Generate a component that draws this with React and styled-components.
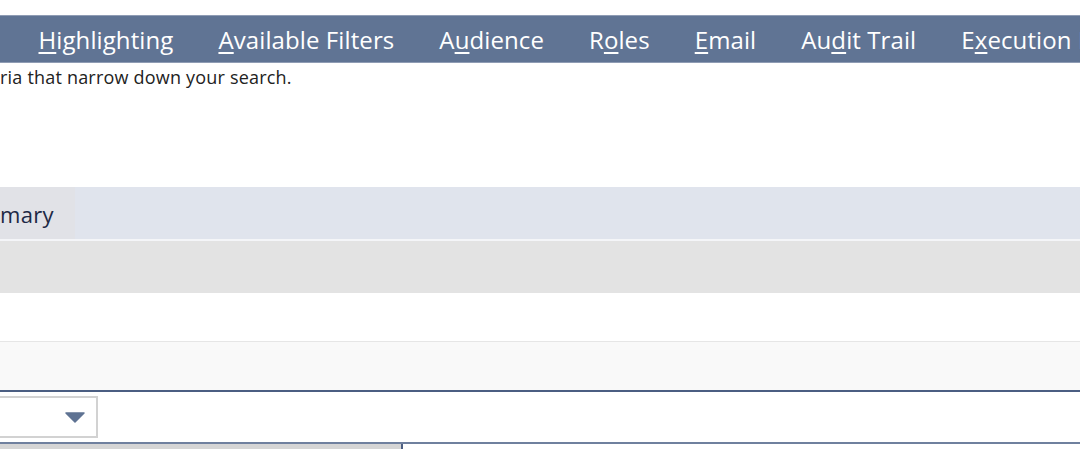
import styled, { createGlobalStyle } from "styled-components";

const GlobalStyle = createGlobalStyle`
  html, body {
    margin: 0;
    padding: 0;
    background: #ffffff;
    font-family: "Open Sans", "Noto Sans", sans-serif;
    overflow: hidden;
  }
`;

const Page = styled.div`
  width: 1080px;
  height: 449px;
  overflow: hidden;
  padding-top: 15px;
  box-sizing: border-box;
`;

// Top tab navigation
const NavBar = styled.nav`
  display: flex;
  align-items: center;
  height: 48px;
  box-sizing: border-box;
  background: #607494;
  border-top: 1px solid #8f9cb4;
  border-bottom: 1px solid #8f9cb4;
  padding-left: 16px;
  padding-top: 2px;
  white-space: nowrap;
  overflow: hidden;
`;

const NavItem = styled.a`
  flex: none;
  padding: 0 22.5px;
  color: #ffffff;
  font-size: 24px;
  line-height: 44px;
  text-decoration: none;
  letter-spacing: 0.1px;

  u {
    text-decoration-thickness: 2px;
    text-underline-offset: 3px;
  }
`;

const Description = styled.p`
  margin: 0;
  padding-top: 2px;
  height: 122px;
  font-size: 18px;
  line-height: 24px;
  letter-spacing: 0.2px;
  color: #222222;
  white-space: nowrap;
`;

// Sub tabs
const SubTabBar = styled.div`
  display: flex;
  height: 52px;
  background: #e0e4ed;
  border-bottom: 2px solid #f4f5f8;
`;

const SubTab = styled.div`
  width: 75px;
  display: flex;
  align-items: center;
  background: #e1e2e7;
  color: #1d2945;
  font-size: 22px;
  letter-spacing: 0.3px;
  padding-top: 2px;
  box-sizing: border-box;
`;

const Band = styled.div`
  height: ${(p) => p.$h}px;
  background: ${(p) => p.$bg};
  border-top: ${(p) => (p.$top ? `1px solid ${p.$top}` : "none")};
  border-bottom: ${(p) => (p.$bottom ? `2px solid ${p.$bottom}` : "none")};
`;

const FilterRow = styled.div`
  display: flex;
  align-items: center;
  height: 50px;
  border-bottom: 2px solid #6f809e;
`;

const Select = styled.div`
  width: 98px;
  height: 42px;
  box-sizing: border-box;
  border: 2px solid #d2d2d2;
  border-left: none;
  display: flex;
  align-items: center;
  justify-content: flex-end;
  padding-right: 11px;
`;

const Results = styled.div`
  display: grid;
  grid-template-columns: 403px 1fr;
  height: 10px;
`;

const ResultsSide = styled.div`
  background: #d5d5d5;
  border-right: 2px solid #4d5f82;
`;

const ResultsMain = styled.div`
  background: #ffffff;
`;

const navItems = [
  ["", "H", "ighlighting"],
  ["", "A", "vailable Filters"],
  ["A", "u", "dience"],
  ["R", "o", "les"],
  ["", "E", "mail"],
  ["Au", "d", "it Trail"],
  ["E", "x", "ecution Log"],
];

export default function App() {
  return (
    <>
      <GlobalStyle />
      <Page>
        <NavBar>
          {navItems.map(([pre, key, post]) => (
            <NavItem key={pre + key + post}>
              {pre}
              <u>{key}</u>
              {post}
            </NavItem>
          ))}
        </NavBar>
        <Description>ria that narrow down your search.</Description>
        <SubTabBar>
          <SubTab>mary</SubTab>
        </SubTabBar>
        <Band $h={52} $bg="#e3e3e3" />
        <Band $h={48} $bg="#ffffff" />
        <Band $h={48} $bg="#f9f9f9" $top="#e6e6e6" $bottom="#4b5e82" />
        <FilterRow>
          <Select>
            <svg width="20" height="11" viewBox="0 0 20 11">
              <path d="M1 1 L19 1 L10 10 Z" fill="#5f7393" stroke="#5f7393" strokeWidth="1.5" strokeLinejoin="round" />
            </svg>
          </Select>
        </FilterRow>
        <Results>
          <ResultsSide />
          <ResultsMain />
        </Results>
      </Page>
    </>
  );
}
